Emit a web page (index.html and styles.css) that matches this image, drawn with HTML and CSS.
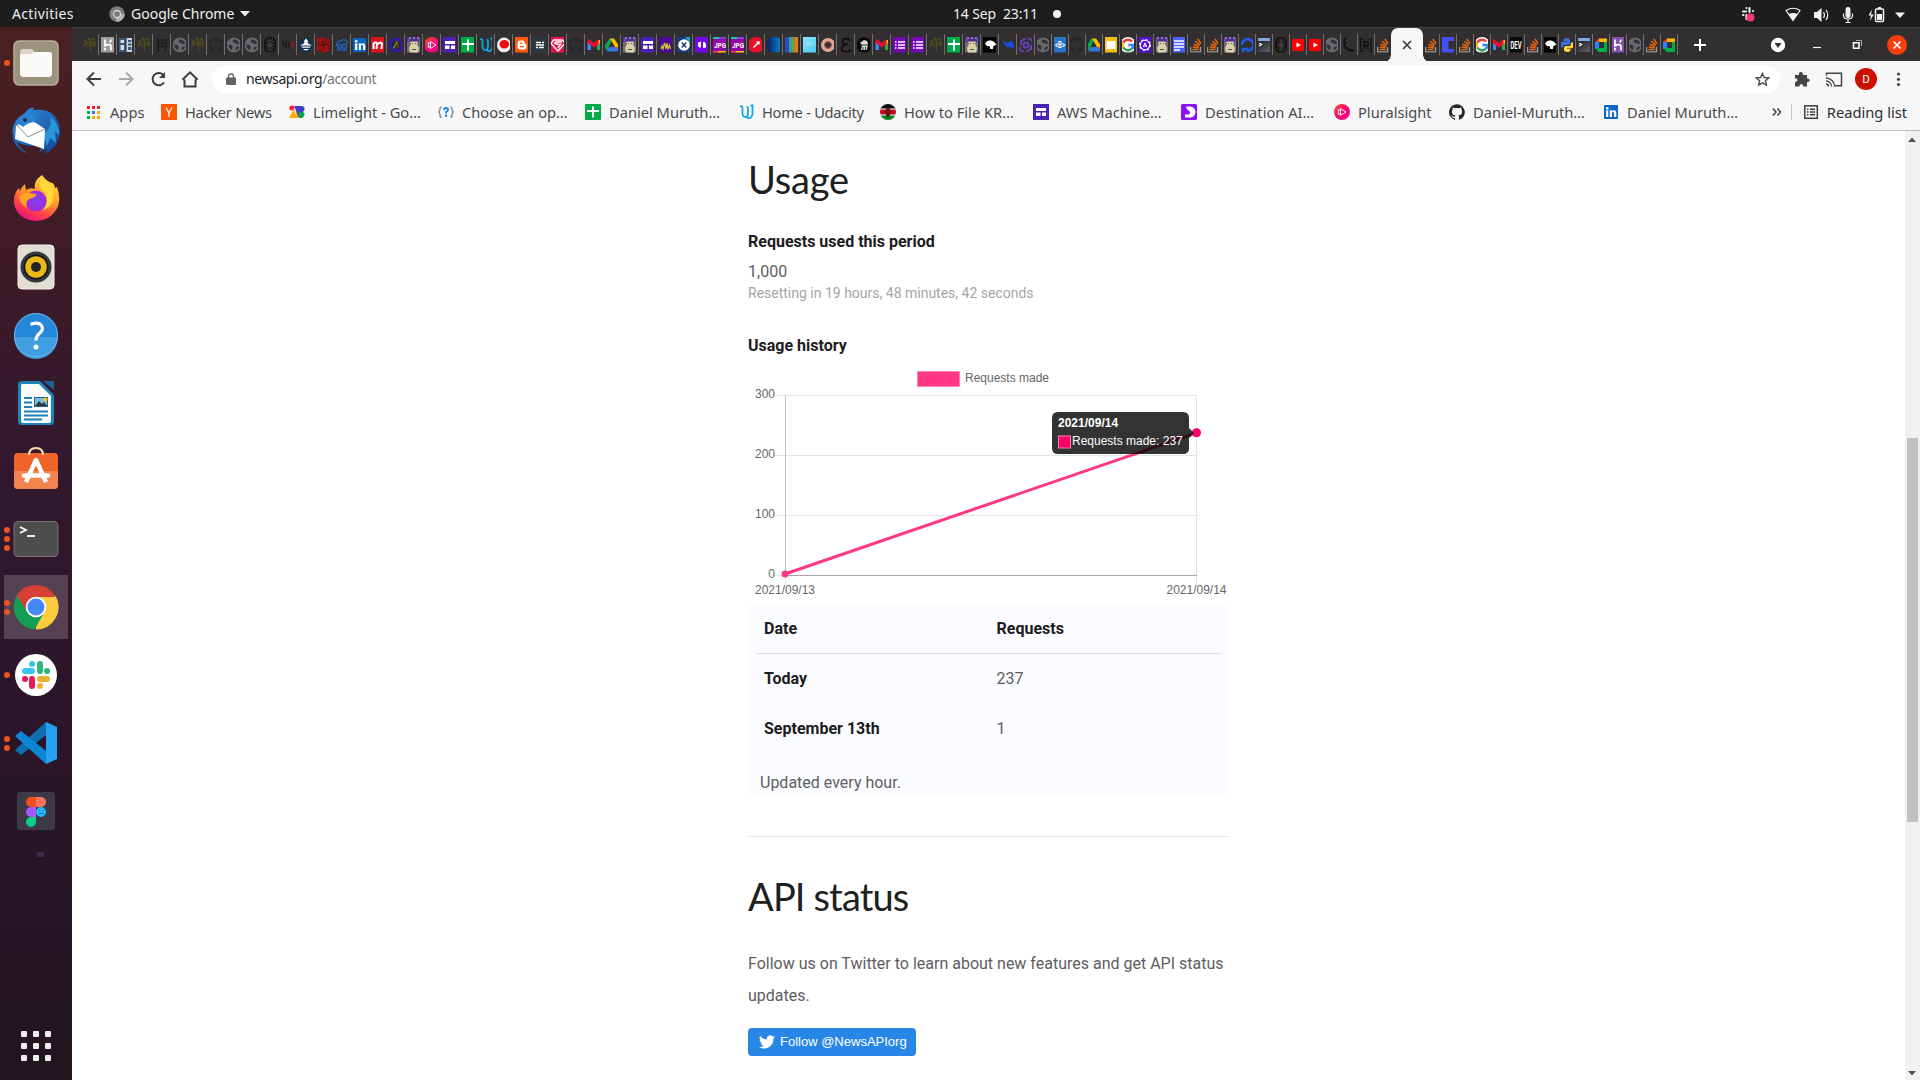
FILE: index.html
```html
<!DOCTYPE html>
<html lang="en">
<head>
<meta charset="utf-8">
<title>newsapi.org/account</title>
<link rel="stylesheet" href="styles.css">
</head>
<body>
<svg class="sprite" width="0" height="0" aria-hidden="true">
  <defs>
    <linearGradient id="g-blue" x1="0" x2="1"><stop offset="0.15" stop-color="#0b2a6b"/><stop offset="1" stop-color="#0a86d0"/></linearGradient>
    <linearGradient id="g-plural" x1="0" y1="0" x2="1" y2="1"><stop offset="0" stop-color="#ff4a2a"/><stop offset="0.6" stop-color="#f0047f"/></linearGradient>
    <linearGradient id="g-cyan" x1="0" y1="0" x2="1" y2="1"><stop offset="0" stop-color="#8be9fb"/><stop offset="1" stop-color="#45c6f0"/></linearGradient>
    <linearGradient id="g-term" x1="0" y1="0" x2="1" y2="1"><stop offset="0" stop-color="#111"/><stop offset="1" stop-color="#667"/></linearGradient>
  </defs>
  <symbol id="tree" viewBox="0 0 16 16"><g fill="none" stroke="#4b501b" stroke-width="1.1"><path d="M8.500 15V8M8.500 10L4 5M8.500 9L12 4M8.500 8V2M6 7H2.500M10 7h4"/></g><g fill="#4b501b"><circle cx="3.500" cy="4.500" r="1.400"/><circle cx="7" cy="2" r="1.400"/><circle cx="11" cy="2.500" r="1.400"/><circle cx="13.500" cy="5.500" r="1.300"/><circle cx="2.800" cy="8" r="1.200"/><circle cx="12.500" cy="8.500" r="1.200"/><circle cx="8.200" cy="5" r="1.500"/></g></symbol>
  <symbol id="herokugrey" viewBox="0 0 16 16"><path fill="#9d9d9d" d="M0 0h16v16H0z"/><path d="M5 2.500v6.300c2.500-1.800 6-1.600 6 .8v3.900M11 2.500c0 1.300-.6 2.200-1.200 3M5 13.500v-2.500" fill="none" stroke="#fff" stroke-width="1.800"/></symbol>
  <symbol id="heroku" viewBox="0 0 16 16"><path fill="#8253a8" d="M0 0h16v16H0z"/><path d="M5 2.500v6.300c2.500-1.800 6-1.600 6 .8v3.900M11 2.500c0 1.300-.6 2.200-1.200 3M5 13.500v-2.500" fill="none" stroke="#fff" stroke-width="1.700"/></symbol>
  <symbol id="panels" viewBox="0 0 16 16"><path fill="#365a78" d="M1 1h6.500v14H1z"/><path fill="#cfd6dc" d="M8.500 1H15v14H8.500z"/><path fill="#cfe0ec" d="M2.500 3h3.500v3H2.500zM2.500 8h3.500v5H2.500z"/><path fill="#365a78" d="M10 3h3.500v2H10zM10 6.500h3.500v2H10zM10 10h3.500v3H10z"/></symbol>
  <symbol id="glyph" viewBox="0 0 16 16"><path d="M2 3h12M2 6h12M2 9h12M4.500 2v13M11.500 2v13M8 4v7" fill="none" stroke="#1c1b1c" stroke-width="1.200"/></symbol>
  <symbol id="globe" viewBox="0 0 16 16"><circle cx="8" cy="8" r="7.500" fill="#656a70"/><path fill="#322f30" d="M2.500 7.500c2 .2 3.500.8 4 2 .4 1.200-.7 1.800-.4 3.500-2.500-.8-3.900-3-3.600-5.500zM8 2.500c2 0 4.500 1.500 5.200 3.600-.8 1.300-2.400 1.300-3 .4-.8-1.100-2.600-.3-3.300-1.600-.2-1 0-2.100 1.100-2.400zM10 10l3.300-.6C12.700 11.600 11 13 9.500 13.300z"/></symbol>
  <symbol id="gitdark" viewBox="0 0 16 16"><path fill="#24272b" d="M8 .2a8 8 0 0 0-2.500 15.600c.4.100.5-.2.500-.4v-1.500c-2.200.5-2.700-1-2.700-1-.4-.9-.9-1.200-.9-1.200-.7-.5.100-.5.100-.5.800.1 1.200.8 1.200.8.700 1.200 1.900.9 2.300.7.100-.5.300-.9.500-1.100-1.800-.2-3.600-.9-3.600-4 0-.9.300-1.600.8-2.100-.1-.2-.4-1 .1-2.100 0 0 .7-.2 2.200.8a7.500 7.500 0 0 1 4 0c1.500-1 2.200-.8 2.200-.8.400 1.100.2 1.900.1 2.100.5.600.8 1.300.8 2.100 0 3.100-1.900 3.700-3.700 3.900.3.300.6.800.6 1.500v2.300c0 .2.100.5.600.4A8 8 0 0 0 8 .2z"/></symbol>
  <symbol id="github" viewBox="0 0 16 16"><path fill="#24292e" d="M8 .2a8 8 0 0 0-2.500 15.600c.4.100.5-.2.500-.4v-1.500c-2.200.5-2.700-1-2.700-1-.4-.9-.9-1.200-.9-1.200-.7-.5.100-.5.100-.5.800.1 1.200.8 1.200.8.700 1.200 1.900.9 2.300.7.100-.5.300-.9.500-1.100-1.800-.2-3.600-.9-3.600-4 0-.9.300-1.600.8-2.100-.1-.2-.4-1 .1-2.100 0 0 .7-.2 2.200.8a7.500 7.500 0 0 1 4 0c1.500-1 2.200-.8 2.200-.8.400 1.100.2 1.900.1 2.100.5.600.8 1.300.8 2.100 0 3.100-1.900 3.700-3.700 3.900.3.300.6.800.6 1.500v2.300c0 .2.100.5.600.4A8 8 0 0 0 8 .2z"/></symbol>
  <symbol id="knot" viewBox="0 0 16 16"><rect x="2" width="12" height="16" rx="5" fill="#161516"/><g fill="none" stroke="#434142"><circle cx="8" cy="8" r="2"/><path d="M4 4l8 8M12 4l-8 8M8 1.500v13M4 8h8M5 2.500q3 3 6 0M5 13.500q3-3 6 0"/></g></symbol>
  <symbol id="four" viewBox="0 0 16 16"><path d="M3 4v4h3.500M6 4v8M9 4v8" fill="none" stroke="#161516" stroke-width="1.200"/><path d="M11 5l3-1v8l-3-3z" fill="#7c1b2b"/></symbol>
  <symbol id="mount" viewBox="0 0 16 16"><circle cx="8" cy="8" r="7.500" fill="#12304f"/><path fill="#fff" d="M8 1.500l2 2.500-.5 2 4.500 2.500H2l4.500-2.500L6 4zM3 9.500h10l-1.500 1.300h-7zM5 12h6l-1.500 1.200h-3z"/></symbol>
  <symbol id="redswirl" viewBox="0 0 16 16"><path d="M1 1l6-.5L15 3v10l-6 2.500L1 14z" fill="#a31212"/><path d="M8 8c-3-1-2-5 2-6M8 8c3-2 6 0 5 4M8 8c1 4-2 6-5 5M8 8C5 10 2 8 2 5M8 8c0-3 4-5 6-2" stroke="#3c1516" fill="none"/></symbol>
  <symbol id="cloud" viewBox="0 0 16 16"><path d="M2.500 9C2 5 5 3.500 7 4c2-3 7-1 6.500 3M3 13h10" fill="none" stroke="#1e62b8" stroke-width="1.300"/><g fill="none" stroke="#1e62b8" stroke-width="1.500"><circle cx="5.700" cy="9.300" r="2"/><circle cx="10.300" cy="9.300" r="2"/></g></symbol>
  <symbol id="linkedin" viewBox="0 0 16 16"><rect x="1" y="1" width="14" height="14" rx="1" fill="#0a66c2"/><circle cx="4.200" cy="4.200" r="1.300" fill="#fff"/><path d="M3.100 6.300h2.200V13H3.100zM6.800 6.300H9v1c1-1.700 4.300-1.500 4.300 1.500V13H11V9.500c0-2-2-1.800-2 0V13H6.800z" fill="#fff"/></symbol>
  <symbol id="mred" viewBox="0 0 16 16"><path fill="#d9151d" d="M0 0h16v16H0z"/><path d="M3.500 12V6.500q2.200-2 3.500 0L6.500 12M7.500 7q2.500-2.500 4.500-.5L11.500 12" fill="none" stroke="#fff" stroke-width="2"/></symbol>
  <symbol id="acog" viewBox="0 0 16 16"><circle cx="8" cy="8" r="5.700" fill="#26282c" stroke="#3413c9" stroke-width="1.800"/><circle cx="8" cy="8" r="7" fill="none" stroke="#3413c9" stroke-width="1.500" stroke-dasharray="2 2.500"/><path d="M5.500 11.500L9.500 4" stroke="#53a53a" stroke-width="1.500"/><path d="M9.500 4L10 11" stroke="#c22" stroke-width="1.100"/></symbol>
  <symbol id="knight" viewBox="0 0 16 16"><path fill="#766a81" d="M0 0h16v16H0z"/><path fill="#51328a" d="M1 0h14v5H1z"/><path d="M3 1h2M7 1h2M11 1h2M2 3h1M13 3h1" stroke="#cbb7e8"/><path fill="#d8d4a8" d="M4 4.500h8l-1 2.500 2 4-1 5H4l-1-5 2-4z"/><path d="M6 6.500h1M9 6.500h1M6 12.500h4" stroke="#57504a" stroke-width="1.200"/></symbol>
  <symbol id="plural" viewBox="0 0 16 16"><circle cx="8" cy="8" r="8" fill="url(#g-plural)"/><path d="M6.500 4.500l5.500 3.500-5.500 3.500zM4.300 5.500v5l2.200-1.200V6.700z" fill="none" stroke="#fff" stroke-width=".9"/></symbol>
  <symbol id="formp" viewBox="0 0 16 16"><path fill="#4d21b8" d="M0 0h16v16H0z"/><path fill="#fff" d="M3 4h10v3H3zM3 8.500h4.500v3.500H3zM9 8.500h4v3.500H9z"/></symbol>
  <symbol id="green" viewBox="0 0 16 16"><rect width="16" height="16" rx="1" fill="#00ac47"/><path fill="#fff" d="M2 6h5V2.500h2V6h5v2H9v5.500H7V8H2z"/></symbol>
  <symbol id="uda" viewBox="0 0 16 16"><path d="M2 2.500c2-1 2.500 0 2.500 2v4.500c0 5.500 5.500 5 5.500 0V4.500C10 2.500 8.500 3 8.500 3M8.500 13c4 3 6-1 6-3.500V1.500h-2" fill="none" stroke="#12a8e0" stroke-width="1.800"/></symbol>
  <symbol id="redeye" viewBox="0 0 16 16"><ellipse cx="8" cy="8" rx="7" ry="7.500" fill="#f3f3f3"/><ellipse cx="8.300" cy="7.200" rx="4.800" ry="4.300" fill="#f00c0c"/></symbol>
  <symbol id="blogger" viewBox="0 0 16 16"><rect width="16" height="16" rx="1" fill="#ff5a0a"/><path d="M6 3.500h2.500a2.300 2.300 0 0 1 2.200 2.500q0 1 1 1.200.8.100.8 1v1.500a3 3 0 0 1-3 2.800H6.300A2.800 2.800 0 0 1 3.500 9.800V6.200A2.700 2.700 0 0 1 6 3.500z" fill="#fff"/><path d="M6 6.200h2.300M6 9.700h4" stroke="#ff5a0a" stroke-width="1.300"/></symbol>
  <symbol id="tealines" viewBox="0 0 16 16"><path fill="#2c3a40" d="M0 0h16v16H0z"/><path d="M4 5.500h5M10 5.500h2M4 8h8M4 10.500h2M7 10.500h5" stroke="#fff" stroke-width="1.300"/></symbol>
  <symbol id="superp" viewBox="0 0 16 16"><path fill="#f0104b" d="M0 0h16v16H0z"/><path d="M3.500 3h9L15 6.500 8 14 1 6.500z" fill="#f0104b" stroke="#fff" stroke-width="1.300"/><path d="M12 5H6.500Q4.500 5 5 6.500q3 1 5.500 1L8 11" stroke="#fff" stroke-width="1.600" fill="none"/></symbol>
  <symbol id="gmail" viewBox="0 0 16 16"><path fill="#4285f4" d="M1.500 4.500L5 7v6H1.500z"/><path fill="#34a853" d="M11 7l3.500-2.500V13H11z"/><path fill="#ea0f2f" d="M1.500 3.500Q3 1.700 5 3.500l3 2.700 3-2.700q2-1.800 3.500 0v2.300L8 10.500 1.500 5.800z"/><path fill="#fbbc04" d="M12.500 3h2v3l-2 1.300z"/></symbol>
  <symbol id="drive" viewBox="0 0 16 16"><path fill="#11a550" d="M5.500 1.500h3L5 9.500l-2 4L0 9.500z"/><path fill="#ffba00" d="M6 1.500h4L16 10h-5z"/><path fill="#3777e3" d="M5 10h11l-2.500 4.500h-11z"/><path fill="#e8402f" d="M12 10h4l-1.800 3z"/></symbol>
  <symbol id="crown" viewBox="0 0 16 16"><path fill="#4a0a93" d="M0 0h16v16H0z"/><path d="M3 12l1-3 1 3 1.500-6L8 12l1-6 1 6 1.500-4 1 4" fill="none" stroke="#d6d722" stroke-width="1.100"/></symbol>
  <symbol id="xblue" viewBox="0 0 16 16"><path fill="#173b77" d="M0 0h16v16H0z"/><path fill="#1ba1d8" d="M9 0h7v9z"/><circle cx="8" cy="8" r="5.800" fill="#fff"/><path d="M5.800 5.500l4.400 5M10.200 5.500l-4.400 5" stroke="#173b77" stroke-width="1.500"/></symbol>
  <symbol id="tooth" viewBox="0 0 16 16"><path fill="#7209e8" d="M0 0h16v16H0z"/><path d="M4 5.500l3-1v6H5.500Q4 10 4 8zM9 5h1.500Q12 6 12 8v2.500L9 11z" fill="#fff"/></symbol>
  <symbol id="jpgbg" viewBox="0 0 16 16"><path fill="#9508a8" d="M0 0h16v16H0z"/><path d="M0 1h7" stroke="#15c7a3" stroke-width="2"/><path d="M7 1h9" stroke="#7d42df" stroke-width="2"/><path d="M1 15h5" stroke="#ff3b58" stroke-width="2"/><path d="M6 15h9" stroke="#ffc800" stroke-width="2"/></symbol>
  <symbol id="redball" viewBox="0 0 16 16"><circle cx="8" cy="8" r="8" fill="#e8102a"/><path d="M5.500 10.500l5-5M8.500 5h2.500v2.500" stroke="#fff" stroke-width="1.500" fill="none"/></symbol>
  <symbol id="bluegrad" viewBox="0 0 16 16"><rect x="1" width="14" height="16" rx="5" fill="url(#g-blue)"/></symbol>
  <symbol id="stripes" viewBox="0 0 16 16"><path fill="#2d4dbd" d="M0 0h5v16H0z"/><path fill="#3c9d9c" d="M5 0h3v16H5z"/><path fill="#6aa042" d="M8 0h3v16H8z"/><path fill="#f27410" d="M11 0h4v16h-4z"/></symbol>
  <symbol id="cyan" viewBox="0 0 16 16"><path fill="url(#g-cyan)" d="M0 0h16v16H0z"/><path d="M5 5v4M5 7h3V5v4M10 6q2 1 0 2" stroke="#b9d6ee" fill="none"/></symbol>
  <symbol id="donut" viewBox="0 0 16 16"><circle cx="8" cy="8" r="5" fill="#322f30" stroke="#dfa892" stroke-width="4"/><circle cx="8" cy="8" r="3.500" fill="none" stroke="#8f4d64"/></symbol>
  <symbol id="sdark" viewBox="0 0 16 16"><path d="M12.500 4Q11 1.500 8 1.500 4.500 1.500 4.500 5 4.500 8 10 7.500 4.500 8 3.500 11q0 4 4.500 4 3.500 0 5-2.500" fill="none" stroke="#0d0d0d" stroke-width="1.700"/></symbol>
  <symbol id="blackround" viewBox="0 0 16 16"><circle cx="8" cy="8" r="7.700" fill="#080808"/><path fill="#dcdcdc" d="M4 6l4-3 3 1 1 3-1 6H5l1-5z"/><path d="M4 8h8M7 10v3M9.500 10v3" stroke="#333"/></symbol>
  <symbol id="listp" viewBox="0 0 16 16"><rect width="16" height="16" rx="1" fill="#7408b5"/><path d="M3 5h1.500M6 5h7M3 8h1.500M6 8h7M3 11h1.500M6 11h7" stroke="#fff" stroke-width="1.600"/></symbol>
  <symbol id="head" viewBox="0 0 16 16"><path fill="#000" d="M0 0h16v16H0z"/><path fill="#fff" d="M3 7q1-4 6-3.500Q14 5 14 8l-2.500 1L11 12H8V9.500L5 9z"/></symbol>
  <symbol id="bird" viewBox="0 0 16 16"><path fill="#1550d8" d="M2 4l6 2 2-2q3 0 4 5l-1 3-3-2-3 .5z"/></symbol>
  <symbol id="hex" viewBox="0 0 16 16"><g fill="none" stroke="#6c3fb5" stroke-width="2"><path d="M7.500 1.500L3 4v4M1.500 9.500v3L6 15M8.500 14.500L13 12V8M14.500 6.500v-3L10 1"/><circle cx="8" cy="8" r="2.500"/></g></symbol>
  <symbol id="keep" viewBox="0 0 16 16"><path fill="#f8bd05" d="M0 0h16v16H0z"/><path fill="#fff" d="M3.500 4h9v8h-9z"/></symbol>
  <symbol id="goog" viewBox="0 0 16 16"><circle cx="8" cy="8" r="8" fill="#fff"/><g fill="none" stroke-width="2.600"><path d="M12 4.500A5.400 5.400 0 0 0 3.300 5.500" stroke="#ea4335"/><path d="M3.300 5.500a5.400 5.400 0 0 0 0 5" stroke="#fbbc05"/><path d="M3.300 10.500a5.400 5.400 0 0 0 8.200 1.600" stroke="#34a853"/><path d="M11.500 12.100Q13.500 10.500 13.400 8H8.300" stroke="#4285f4"/></g></symbol>
  <symbol id="apurple" viewBox="0 0 16 16"><path fill="#5511df" d="M0 0h16v16H0z"/><circle cx="8" cy="8" r="4.700" fill="none" stroke="#fff" stroke-width="1.100"/><circle cx="8" cy="8" r="5.500" fill="none" stroke="#fff" stroke-width="1.100" stroke-dasharray="2 2.300"/><path d="M6.300 10L8 5.800 9.700 10M7 9h2" fill="none" stroke="#fff"/></symbol>
  <symbol id="docs" viewBox="0 0 16 16"><path fill="#4e60ff" d="M0 0h16v16H0z"/><path d="M3 4h10M3 7h10M3 10h10M3 13h6" stroke="#fff" stroke-width="1.500"/></symbol>
  <symbol id="so" viewBox="0 0 16 16"><path d="M2.500 10v5h10v-5" fill="none" stroke="#9a9da0" stroke-width="1.400"/><path d="M4.500 12.500h6M4.700 10l6 .8M5.500 7.200l5.600 2.100M7.200 4.300l4.700 3.500M9.800 2l3.200 4.700" stroke="#e8680f" stroke-width="1.500"/></symbol>
  <symbol id="qblue" viewBox="0 0 16 16"><path d="M8 13.500A5.700 5.700 0 1 0 3 8M8 10.500v3.200M6.500 12H4v3" fill="none" stroke="#1b5ee8" stroke-width="2.600"/></symbol>
  <symbol id="term" viewBox="0 0 16 16"><path fill="url(#g-term)" d="M0 1h16v14H0z"/><path fill="#88a7dd" d="M0 1h16v3H0z"/><path d="M3 6l2.500 1.500L3 9" stroke="#fff" fill="none" stroke-width="1.200"/></symbol>
  <symbol id="yt" viewBox="0 0 16 16"><rect x="1" y="2" width="14" height="12" rx="1.500" fill="#f00"/><path fill="#fff" d="M6.500 5.500L11 8l-4.500 2.500z"/></symbol>
  <symbol id="feather" viewBox="0 0 16 16"><path d="M4 1q-1 9 3 11.500 3 1.500 6 .8" stroke="#161516" stroke-width="3" fill="none"/><path d="M4.500 4l3-1M4.500 8h3" stroke="#444"/></symbol>
  <symbol id="bracket" viewBox="0 0 16 16"><path fill="#4650f2" d="M2 0h12v4H8.500v8H14v4H2z"/></symbol>
  <symbol id="python" viewBox="0 0 16 16"><path fill="#3f6be0" d="M4.500 2.500Q5.500 1 8 1t3 1.800V7L9.500 8h-4Q4 8 4 10.500H2.500Q1 10 1.500 6q.5-1.500 3-1.500H8V4H4.500z"/><path fill="#ffd43b" d="M11.500 13.500Q10.500 15 8 15t-3-1.800V10l1.500-1h4Q12 9 12 5.500h1.500Q15 6 14.500 10q-.5 1.500-3 1.500H8v.5h3.500z"/></symbol>
  <symbol id="meet" viewBox="0 0 16 16"><path fill="#2684fc" d="M2 5h4v7H2z"/><path fill="#e94235" d="M2 5l4-3.500V5z"/><path fill="#ffba00" d="M6 1.500h8V8l-3-3H6z"/><path fill="#00ac47" d="M3 11h8V6l3-2v11H5z"/></symbol>
  <symbol id="kenya" viewBox="0 0 16 16"><clipPath id="kc"><circle cx="8" cy="8" r="8"/></clipPath><g clip-path="url(#kc)"><path fill="#0b0b0b" d="M0 0h16v5H0z"/><path fill="#fff" d="M0 4.500h16v7H0z"/><path fill="#c4091b" d="M0 5.500h16v5H0z"/><path fill="#0a7a1c" d="M0 11.500h16V16H0z"/><ellipse cx="8" cy="8" rx="2" ry="4.500" fill="#8d0a14" stroke="#222"/></g></symbol>
  <symbol id="lime" viewBox="0 0 16 16"><circle cx="2.800" cy="4" r="2.500" fill="#ff1f35"/><path fill="#ffab00" d="M0 14L5 5l2 9zM7 6l3 8H6z"/><path fill="#3a3fc6" d="M5 2h5v12z"/><path fill="#3a3fc6" d="M10 2h3q3 1 2.500 3.500L14 8h-4z"/><path fill="#00a64d" d="M10 8h4q2 1 1.500 3T13 14h-3z"/></symbol>
  <symbol id="choose" viewBox="0 0 16 16"><path d="M4 3H3Q2 3 2 5T.5 8Q2 8 2 11t1 2h1M12 3h1q1 0 1 2t1.500 3Q14 8 14 11t-1 2h-1" fill="none" stroke="#777" stroke-width="1.200"/><path d="M6 6q0-2 2-2t2 1.700Q10 7 8 8v1.500" fill="none" stroke="#0b8af0" stroke-width="1.900"/><circle cx="8" cy="11.700" r="1.200" fill="#0b8af0"/></symbol>
  <symbol id="dest" viewBox="0 0 16 16"><rect width="16" height="16" rx="1.500" fill="#8b10f5"/><path d="M5 2.500h4a5 5 0 0 1 0 11H4v-3h4a3 3 0 0 0 0-4q-2 0-3-4z" fill="#fff"/></symbol>
</svg>

<header class="topbar">
  <span class="activities">Activities</span>
  <svg class="appicon" width="16" height="16"><circle cx="8" cy="8" r="7.700" fill="#7d7d7d"/><path d="M8 8h7.700A7.700 7.700 0 0 1 7 15.600z" fill="#b5b5b5"/><circle cx="8" cy="8" r="3.500" fill="#777" stroke="#d5d5d5" stroke-width="1.300"/></svg>
  <span class="appname">Google Chrome</span>
  <svg class="appcaret" width="10" height="6"><path d="M0 0h10L5 5.500z" fill="#f2f2f2"/></svg>
  <time class="clock">14 Sep&nbsp; 23:11</time>
  <span class="clockdot"></span>
  <svg class="tray" width="168" height="24" fill="#f2f2f2">
    <g stroke="#e8e8e8" stroke-width="2.200" stroke-linecap="round"><path d="M4 9.500h3M7.500 6v.1M10.500 6v4M14 9h.1M4 13h.5M7.500 13v4M10 13h3"/></g><circle cx="11.500" cy="15.500" r="4" fill="#f0387c"/>
    <path d="M47 8.500q7.500-4.500 14 0L54 18.500z" fill="none" stroke="#f2f2f2" stroke-width="1.200"/><path d="M49.500 12q4.500-2 9 0L54 18.500z"/>
    <path d="M75 10h3l4.500-4v14L78 16h-3z"/><path d="M84.500 10q2 3 0 6M87 8q3.500 5 0 10" fill="none" stroke="#f2f2f2" stroke-width="1.200"/>
    <rect x="106.500" y="5" width="5" height="11" rx="2.500"/><path d="M104.500 11.500v2q0 3.500 4.500 3.500t4.500-3.500v-2M109 17v3.500M106.500 20.500h5" fill="none" stroke="#f2f2f2" stroke-width="1.200"/>
    <path d="M133 7.500l-3.500 6h2.500l-1 5.500 3.700-6.500H132z"/><rect x="136.500" y="7" width="8" height="12.500" rx="1" fill="none" stroke="#f2f2f2" stroke-width="1.500"/><path d="M139 5h3v2h-3zM138 12h5v6h-5z"/>
    <path d="M156 10.500h10l-5 5.500z"/>
  </svg>
</header>

<div class="desktop">
  <nav class="dock">
    <div class="launcher"><span class="dots"><b></b></span>
      <svg width="48" height="48"><rect x="2" y="2" width="44" height="44" rx="5" fill="#9c937d" stroke="#b9b09a" stroke-width="1.500"/><path d="M8 13q0-3 3-3h9l3 3h14q3 0 3 3v18q0 4-4 4H12q-4 0-4-4z" fill="#dbd5c7"/><path d="M8 17q0-2 2-2h9l4-2h14q3 0 3 3v18q0 4-4 4H12q-4 0-4-4z" fill="#fbfaf8"/></svg></div>
    <div class="launcher">
      <svg width="48" height="48"><defs><linearGradient id="tb" x1="0" x2="1" y2="1"><stop offset="0" stop-color="#3391e0"/><stop offset="1" stop-color="#0c438f"/></linearGradient></defs><path d="M13 6Q17 0 22 1l-1 2Q46 0 48 24q-1 16-15 23l2-5-8 3 3-6Q4 40 1 30-2 14 13 6z" fill="url(#tb)"/><path d="M38 9q10 9 9 19l-4-4 1 12-6-5-3 8-4-12q10-6 7-18z" fill="#2c94dc"/><path d="M1 25q3 15 16 22l-7-3Q-1 36 1 25z" fill="#1b5eaf"/><path d="M4 19q10-8 20-3l9 6-1 20L3 32z" fill="#fff"/><path d="M5 18l11 12 17-8" fill="none" stroke="#8d9296"/><path d="M4 17Q7 6 17 7q10 2 5 8-7 1-11 5-3-3-7-3z" fill="#2c83d2"/><circle cx="13" cy="13" r="2" fill="#283050"/></svg></div>
    <div class="launcher">
      <svg width="48" height="48"><defs><linearGradient id="ff" x1=".8" y1="0" x2=".3" y2="1"><stop offset="0" stop-color="#ffe63f"/><stop offset=".45" stop-color="#ff9a2a"/><stop offset=".75" stop-color="#ff4444"/><stop offset="1" stop-color="#e80c83"/></linearGradient><radialGradient id="ffp"><stop offset="0" stop-color="#7a45f5"/><stop offset="1" stop-color="#a32bd6"/></radialGradient></defs><path d="M30 0q4 6 10 8 2 0 3 5l2-1q5 14-1 23-7 11-20 11Q6 45 2 29q-1-10 5-16l1 3q2-5 5-7l1 6q4-3 9-1-2-8 7-14z" fill="url(#ff)"/><circle cx="24" cy="26" r="10.500" fill="url(#ffp)"/><path d="M7 22q4-5 10-4l8 1q-2 4-8 5-4 3-2 9-7-4-8-11z" fill="#ffa322"/><path d="M29 4q-4 7 4 14 5 8-2 17 11-3 11-17-1-8-13-14z" fill="#ffd83a"/></svg></div>
    <div class="launcher">
      <svg width="48" height="48"><rect x="6" y="2" width="36" height="44" rx="4" fill="#e3ded3" stroke="#f4f1ea"/><circle cx="24" cy="24" r="15.500" fill="#31383f"/><circle cx="24" cy="24" r="12.500" fill="#101418"/><circle cx="24" cy="24" r="10.800" fill="#e9b716"/><circle cx="24" cy="24" r="5" fill="#202428"/></svg></div>
    <div class="launcher">
      <svg width="48" height="48"><circle cx="24" cy="24" r="22" fill="#2488d8"/><path d="M2 26h44a22 22 0 0 1-44 0z" fill="#409de0"/><circle cx="24" cy="24" r="21.500" fill="none" stroke="#6db6ea"/><path d="M18.500 13.500q5-2.500 9.500-.5 5 4 0 9-4 3-4 7.500" fill="none" stroke="#fff" stroke-width="3.200"/><circle cx="24" cy="36" r="2.500" fill="#fff"/></svg></div>
    <div class="launcher">
      <svg width="48" height="48"><path d="M10 2h18l14 14v26q0 4-4 4H10q-4 0-4-4V6q0-4 4-4z" fill="#2083b7"/><path d="M10 5h17l12 12v25q0 2-2 2H11q-2 0-2-2V6z" fill="#fafcfd"/><path d="M31 2h11v9z" fill="#166490"/><path d="M12 19h8M12 23.500h8M12 28h8M12 32.500h24M12 36.500h24M12 40.500h18" stroke="#1c81b5" stroke-width="2"/><path d="M22 18h14v10H22z" fill="#1c6286"/><path d="M23 19h12v8H23z" fill="#7bbce0"/><path d="M23 27l4-5 3 3 2-2 3 4z" fill="#2d3b40"/><circle cx="33.500" cy="20.500" r="2" fill="#f6c51d"/></svg></div>
    <div class="launcher">
      <svg width="48" height="48"><rect x="2" y="6" width="44" height="36" rx="4" fill="#f0642c"/><path d="M2 24h44v14q0 4-4 4H6q-4 0-4-4z" fill="#f3834f"/><path d="M17 8q0-7 7-7t7 7" fill="none" stroke="#f3ddb0" stroke-width="2"/><path d="M14 35l10-22 10 22" fill="none" stroke="#fff" stroke-width="4.500" stroke-linejoin="round"/><path d="M12 28.500h24" stroke="#fff" stroke-width="4.500" stroke-linecap="round"/></svg></div>
    <div class="launcher"><span class="dots"><b></b><b></b><b></b></span>
      <svg width="48" height="48"><rect x="2" y="6.500" width="44" height="35" rx="4" fill="#4d4d4b" stroke="#777"/><path d="M8 12l6 3-6 3" fill="none" stroke="#fff" stroke-width="1.800"/><path d="M15 21h8" stroke="#fff" stroke-width="1.800"/></svg></div>
    <div class="launcher launcher-active"><span class="dots"><b></b><b></b></span>
      <svg width="48" height="48"><path d="M24 24l19.500-11.300A22.500 22.500 0 0 1 24 46.500z" fill="#fdcb3f"/><path d="M24 13.700h20l-6 13-14-2z" fill="#fdcb3f"/><path d="M4.500 12.700A22.500 22.500 0 0 1 43.500 13.700H24L14 28z" fill="#d83f35"/><path d="M5 12.500l10.500 17L24 34l8-4-9.500 16.400A22.500 22.500 0 0 1 5 12.500z" fill="#139e56"/><circle cx="24" cy="24" r="10.300" fill="#fff"/><circle cx="24" cy="24" r="8.500" fill="#4688f4"/></svg></div>
    <div class="launcher"><span class="dots"><b></b></span>
      <svg width="48" height="48"><circle cx="24" cy="24" r="21" fill="#fff"/><g stroke-width="6" stroke-linecap="round"><path d="M13 20h7M20 13v.1" stroke="#36c5f0"/><path d="M28 13v7M35 20h.1" stroke="#2eb67d"/><path d="M28 28h7M28 35v.1" stroke="#ecb22e"/><path d="M20 28v7M13 28h.1" stroke="#e01e5a"/></g></svg></div>
    <div class="launcher"><span class="dots"><b></b><b></b></span>
      <svg width="48" height="48"><path d="M34 3v13L9 36l-6-5z" fill="#0f6fb3"/><path d="M3 17l6-5 25 20v13z" fill="#0b87d3"/><path d="M34 3l11 5v32l-11 5z" fill="#27a0f2"/></svg></div>
    <div class="launcher">
      <svg width="48" height="48"><rect x="5" y="5" width="38" height="38" rx="3" fill="#3e3947"/><path d="M24 10h-5a5 5 0 0 0 0 10h5z" fill="#f24e1e"/><path d="M24 10h5a5 5 0 0 1 0 10h-5z" fill="#ff7262"/><path d="M24 20h-5a5 5 0 0 0 0 10h5z" fill="#a259ff"/><circle cx="29" cy="25" r="5" fill="#1abcfe"/><path d="M19 30h5v5a5 5 0 1 1-5-5z" fill="#0acf83"/><path d="M27 23.500h1M31 23.500h1M27 26.500h5" stroke="#23639a"/></svg></div>
    <span class="faint"></span>
    <div class="appgrid"><b></b><b></b><b></b><b></b><b></b><b></b><b></b><b></b><b></b></div>
  </nav>

  <section class="browser">
    <div class="tabstrip">
      <div class="tabs">
        <i><svg><use href="#tree"/></svg></i><i><svg><use href="#herokugrey"/></svg></i><i><svg><use href="#panels"/></svg></i><i><svg><use href="#tree"/></svg></i>
        <i><svg><use href="#glyph"/></svg></i><i><svg><use href="#globe"/></svg></i><i><svg><use href="#tree"/></svg></i><i><svg><use href="#gitdark"/></svg></i>
        <i><svg><use href="#globe"/></svg></i><i><svg><use href="#globe"/></svg></i><i><svg><use href="#knot"/></svg></i><i><svg><use href="#four"/></svg></i>
        <i><svg><use href="#mount"/></svg></i><i><svg><use href="#redswirl"/></svg></i><i><svg><use href="#cloud"/></svg></i><i><svg><use href="#linkedin"/></svg></i>
        <i><svg><use href="#mred"/></svg></i><i><svg><use href="#acog"/></svg></i><i><svg><use href="#knight"/></svg></i><i><svg><use href="#plural"/></svg></i>
        <i><svg><use href="#formp"/></svg></i><i><svg><use href="#green"/></svg></i><i><svg><use href="#uda"/></svg></i><i><svg><use href="#redeye"/></svg></i>
        <i><svg><use href="#blogger"/></svg></i><i><svg><use href="#tealines"/></svg></i><i><svg><use href="#superp"/></svg></i><i><svg><use href="#gitdark"/></svg></i>
        <i><svg><use href="#gmail"/></svg></i><i><svg><use href="#drive"/></svg></i><i><svg><use href="#knight"/></svg></i><i><svg><use href="#formp"/></svg></i>
        <i><svg><use href="#crown"/></svg></i><i><svg><use href="#xblue"/></svg></i><i><svg><use href="#tooth"/></svg></i>
        <i><svg><use href="#jpgbg"/><text x="2" y="11" font-size="7.500" font-weight="bold" fill="#fff" textLength="12" lengthAdjust="spacingAndGlyphs">JPG</text></svg></i>
        <i><svg><use href="#jpgbg"/><text x="2" y="11" font-size="7.500" font-weight="bold" fill="#fff" textLength="12" lengthAdjust="spacingAndGlyphs">JPG</text></svg></i>
        <i><svg><use href="#redball"/></svg></i><i><svg><use href="#bluegrad"/></svg></i><i><svg><use href="#stripes"/></svg></i>
        <i><svg><use href="#cyan"/></svg></i><i><svg><use href="#donut"/></svg></i><i><svg><use href="#sdark"/></svg></i><i><svg><use href="#blackround"/></svg></i>
        <i><svg><use href="#gmail"/></svg></i><i><svg><use href="#listp"/></svg></i><i><svg><use href="#listp"/></svg></i><i><svg><use href="#tree"/></svg></i>
        <i><svg><use href="#green"/></svg></i><i><svg><use href="#knight"/></svg></i><i><svg><use href="#head"/></svg></i><i><svg><use href="#bird"/></svg></i>
        <i><svg><use href="#hex"/></svg></i>
      </div>
      <div class="tabs tabs-narrow">
        <i><svg><use href="#globe"/></svg></i>
        <i><svg><path fill="#2b73c4" d="M0 0h16v16H0z"/><text x="3" y="11" font-size="8.500" font-weight="bold" fill="#fff" textLength="10" lengthAdjust="spacingAndGlyphs">&lt;B&gt;</text></svg></i>
        <i><svg><use href="#gitdark"/></svg></i><i><svg><use href="#drive"/></svg></i>
        <i><svg><use href="#keep"/></svg></i><i><svg><use href="#goog"/></svg></i><i><svg><use href="#apurple"/></svg></i><i><svg><use href="#knight"/></svg></i>
        <i><svg><use href="#docs"/></svg></i><i><svg><use href="#so"/></svg></i><i><svg><use href="#so"/></svg></i><i><svg><use href="#knight"/></svg></i>
        <i><svg><use href="#qblue"/></svg></i><i><svg><use href="#term"/></svg></i><i><svg><use href="#knot"/></svg></i><i><svg><use href="#yt"/></svg></i>
        <i><svg><use href="#yt"/></svg></i><i><svg><use href="#globe"/></svg></i><i><svg><use href="#feather"/></svg></i>
        <i><svg><path d="M5 2H2.800v12H5M11 2h2.200v12H11" fill="none" stroke="#141314" stroke-width="1.300"/><text x="8.200" y="12" text-anchor="middle" font-size="10.500" font-weight="bold" fill="#0c0c0c">R</text></svg></i>
        <i class="last"><svg><use href="#so"/></svg></i>
      </div>
      <div class="tab-active"><svg width="10" height="10"><path d="M1 1l8 8M9 1L1 9" stroke="#3c3c3c" stroke-width="1.700"/></svg></div>
      <div class="tabs tabs-narrow">
        <i><svg><use href="#so"/></svg></i><i><svg><use href="#bracket"/></svg></i><i><svg><use href="#so"/></svg></i><i><svg><use href="#goog"/></svg></i>
        <i><svg><use href="#gmail"/></svg></i>
        <i><svg><path fill="#0a0a0a" d="M0 0h16v16H0z"/><text x="2.500" y="12" font-size="10.500" font-weight="bold" fill="#fff" textLength="11" lengthAdjust="spacingAndGlyphs">DEV</text></svg></i>
        <i><svg><use href="#so"/></svg></i><i><svg><use href="#head"/></svg></i>
        <i><svg><use href="#python"/></svg></i><i><svg><use href="#term"/></svg></i><i><svg><use href="#meet"/></svg></i><i><svg><use href="#heroku"/></svg></i>
        <i><svg><use href="#globe"/></svg></i><i><svg><use href="#so"/></svg></i><i><svg><use href="#meet"/></svg></i>
      </div>
      <svg class="newtab" width="12" height="12"><path d="M6 0v12M0 6h12" stroke="#fff" stroke-width="2"/></svg>
      <svg class="wincontrols" width="138" height="22" fill="none"><circle cx="8" cy="11" r="7.200" fill="#fff"/><path d="M4.500 9h7L8 14z" fill="#322f30"/><path d="M43 13.500h8" stroke="#fff" stroke-width="1.200"/><path d="M83.500 8.800h5.500v5.500h-5.500z" stroke="#fff" stroke-width="1.600"/><path d="M86 6.500h5.500V12" stroke="#aaa"/><circle cx="127" cy="11" r="10" fill="#f73e0b"/><path d="M123.500 7.500l7 7M130.500 7.500l-7 7" stroke="#fff" stroke-width="1.700"/></svg>
    </div>

    <div class="toolbar">
      <svg class="navicons" width="114" height="20" fill="none" stroke="#3b3d40" stroke-width="2"><path d="M15 10H2M8 3.500L1.500 10 8 16.500"/><path d="M33 10h13M40 3.500L46.500 10 40 16.500" stroke="#a9a9a9"/><path d="M78 13.500A6.200 6.200 0 1 1 77 5.500l1.200 1.500"/><path d="M79 3v6h-6z" fill="#3b3d40" stroke="none"/><path d="M98.500 10.500v7h11v-7M96.500 10.800L104 3.300l7.500 7.500"/></svg>
      <div class="omnibox">
        <svg width="10" height="13"><path d="M1 4.500h8q1 0 1 1V11q0 1-1 1H1q-1 0-1-1V5.500q0-1 1-1z" fill="#5f6368"/><path d="M2.500 5V3q0-2 2.500-2t2.500 2v2" fill="none" stroke="#5f6368" stroke-width="1.400"/></svg>
        <span class="url"><b>newsapi.org</b>/account</span>
        <svg class="star" width="15" height="15"><path d="M7.500 1.500l1.800 4 4.400.4-3.300 2.900 1 4.300-3.900-2.300-3.900 2.300 1-4.300L1.300 5.900l4.400-.4z" fill="none" stroke="#4a4a4a" stroke-width="1.400"/></svg>
      </div>
      <svg class="toolicons" width="110" height="22"><path d="M1 7h4q-.5-3 1.800-3T9 7h4v3.500q2.700-.2 2.700 1.800T13 14v4.500H9.300q.2-2.500-1.900-2.500t-2 2.500H1V14q2.500.1 2.500-1.900T1 10.500z" fill="#444"/><path d="M32.500 7.500V5.200h15v12.500H41" fill="none" stroke="#444" stroke-width="1.500"/><path d="M32 16a2.500 2.500 0 0 1 2.500 2.500M32 13a5.500 5.500 0 0 1 5.500 5.500M32 10a8.500 8.500 0 0 1 8.500 8.500" fill="none" stroke="#444" stroke-width="1.300"/><circle cx="72" cy="11" r="11" fill="#cb1202"/><text x="72" y="15" font-size="11.500" text-anchor="middle" fill="#fff">D</text><g fill="#444"><circle cx="104.500" cy="6" r="1.600"/><circle cx="104.500" cy="11.300" r="1.600"/><circle cx="104.500" cy="16.500" r="1.600"/></g></svg>
    </div>

    <div class="bookmarks">
      <div class="bookmark-list">
        <a class="apps"><svg class="bm"><path fill="#f01b2c" d="M2 2h3v3H2zM7 2h3v3H7zM12 2h3v3h-3z"/><path fill="#00ac47" d="M2 7h3v3H2z"/><path fill="#2b7df0" d="M7 7h3v3H7z"/><path fill="#ffab00" d="M12 7h3v3h-3zM7 12h3v3H7zM12 12h3v3h-3z"/><path fill="#00ac47" d="M2 12h3v3H2z"/></svg><span>Apps</span></a>
        <a class="snug"><svg class="bm"><path fill="#ff5500" d="M0 0h16v16H0z"/><path d="M5 3.500L8 9l3-5.500M8 8.500V13" stroke="#fff" stroke-width="1.300" fill="none"/></svg><span>Hacker News</span></a>
        <a><svg class="bm"><use href="#lime"/></svg><span>Limelight - Go…</span></a>
        <a><svg class="bm"><use href="#choose"/></svg><span>Choose an op…</span></a>
        <a><svg class="bm"><use href="#green"/></svg><span>Daniel Muruth…</span></a>
        <a class="snug"><svg class="bm"><use href="#uda"/></svg><span>Home - Udacity</span></a>
        <a><svg class="bm"><use href="#kenya"/></svg><span>How to File KR…</span></a>
        <a><svg class="bm"><use href="#formp"/></svg><span>AWS Machine…</span></a>
        <a><svg class="bm"><use href="#dest"/></svg><span>Destination AI…</span></a>
        <a><svg class="bm"><use href="#plural"/></svg><span>Pluralsight</span></a>
        <a><svg class="bm"><use href="#github"/></svg><span>Daniel-Muruth…</span></a>
        <a><svg class="bm"><use href="#linkedin"/></svg><span>Daniel Muruth…</span></a>
      </div>
      <svg class="more" width="10" height="8"><path d="M1 .5L4 4 1 7.500M5.500.5l3 3.500-3 3.500" fill="none" stroke="#3c3c3c" stroke-width="1.500"/></svg>
      <span class="readsep"></span>
      <a class="reading"><svg class="bm"><rect x="1.800" y="1.800" width="12.500" height="12.500" fill="none" stroke="#3c3c3c" stroke-width="1.500"/><path d="M4 5.300h1.500M7 5.300h5M4 8h1.500M7 8h5M4 10.800h1.500M7 10.800h5" stroke="#3c3c3c" stroke-width="1.400"/></svg><span>Reading list</span></a>
    </div>

    <div class="viewport">
      <main class="page">
        <h2 class="title">Usage</h2>
        <h5 class="sub">Requests used this period</h5>
        <p class="count">1,000</p>
        <p class="reset">Resetting in 19 hours, 48 minutes, 42 seconds</p>
        <h5 class="sub history">Usage history</h5>
        <svg class="chart" width="481" height="240">
          <rect x="169.500" y="8.500" width="42" height="15" fill="#ff3785" stroke="#ff85b3"/>
          <text x="217" y="19">Requests made</text>
          <g stroke="#e4e4e4"><path d="M27 32.500H449M27 92.500H449M27 152.500H449M27 212.500H37M448.500 32V222M37.500 212V222"/></g>
          <path d="M37.500 32V212" stroke="#c4c4c4"/><path d="M38 212.500H449" stroke="#a6a6a6"/>
          <g text-anchor="end"><text x="27" y="35">300</text><text x="27" y="95">200</text><text x="27" y="155">100</text><text x="27" y="215">0</text></g>
          <g text-anchor="middle"><text x="37" y="231">2021/09/13</text><text x="448.500" y="231">2021/09/14</text></g>
          <path d="M37 211L448.500 69.800" stroke="#ff3785" stroke-width="3"/>
          <circle cx="37" cy="211" r="3.500" fill="#ff3785"/><circle cx="448.500" cy="69.800" r="4.500" fill="#ff0066"/>
          <path d="M310 49h125q6 0 6 6v10l5 5-5 5v10q0 6-6 6H310q-6 0-6-6V55q0-6 6-6z" fill="#000" fill-opacity=".8"/>
          <text x="310" y="64" class="tip tip-title">2021/09/14</text>
          <rect x="310.500" y="73" width="12" height="12" fill="#ff0066" stroke="#ff85b3"/>
          <text x="324" y="82" class="tip">Requests made: 237</text>
        </svg>
        <section class="panel">
          <table class="usage">
            <thead><tr><th>Date</th><th>Requests</th></tr></thead>
            <tbody><tr><th>Today</th><td>237</td></tr><tr><th>September 13th</th><td>1</td></tr></tbody>
          </table>
          <p class="updated">Updated every hour.</p>
        </section>
        <hr class="rule">
        <h2 class="title status">API status</h2>
        <p class="follow">Follow us on Twitter to learn about new features and get API status updates.</p>
        <a class="twitter"><svg width="16" height="14" viewBox="0 0 24 20"><path fill="#fff" d="M24 2.400c-.9.400-1.800.7-2.800.8 1-.6 1.800-1.600 2.200-2.700-1 .6-2 1-3.100 1.200a4.900 4.900 0 0 0-8.400 4.500C7.700 6 4.100 4.100 1.700 1.100a4.900 4.900 0 0 0 1.500 6.600c-.8 0-1.600-.2-2.200-.6 0 2.300 1.600 4.400 3.900 4.900-.7.200-1.500.2-2.200.1.600 2 2.400 3.400 4.600 3.400A9.900 9.900 0 0 1 0 17.500 14 14 0 0 0 21.500 5c1-.7 1.800-1.600 2.500-2.600z"/></svg><span>Follow @NewsAPIorg</span></a>
      </main>
      <div class="scrollbar"><svg width="9" height="5"><path d="M0 5h8L4 .5z" fill="#505050"/></svg><span class="thumb"></span><svg width="9" height="5"><path d="M0 0h8L4 4.500z" fill="#505050"/></svg></div>
    </div>
  </section>
</div>
</body>
</html>
```
FILE: styles.css
```css
* { box-sizing: border-box; }
body { margin: 0; width: 1920px; height: 1080px; overflow: hidden; background: #fff; font-family: "Noto Sans", sans-serif; display: flex; flex-direction: column; }
svg { display: block; flex: none; }
p, h2, h5 { margin: 0; }
.sprite { position: absolute; }

.topbar { height: 27px; flex: none; background: #1d1d1d; color: #f0f0f0; display: flex; align-items: center; font-size: 14px; line-height: 26px; white-space: nowrap; }
.activities { width: 97px; padding-left: 12px; letter-spacing: .35px; }
.appicon { margin-left: 12px; }
.appname { width: 110px; margin-left: 6px; }
.appcaret { margin-left: -1px; }
.clock { margin-left: 703px; width: 95px; letter-spacing: -.15px; }
.clockdot { width: 8px; height: 8px; border-radius: 50%; background: #f2f2f2; margin-left: 5px; }
.tray { margin-left: auto; margin-right: 13px; }

.desktop { flex: 1; display: flex; min-height: 0; }
.dock { width: 72px; flex: none; padding-top: 2px; background: linear-gradient(#4a2122, #3c1a28 25%, #32182f 42%, #2a1529 70%, #21151d); display: flex; flex-direction: column; align-items: center; }
.launcher { width: 72px; height: 68px; flex: none; display: flex; align-items: center; }
.launcher svg { margin-left: auto; margin-right: 12px; }
.launcher-active { background: linear-gradient(#554152, #554152) 4px 2px / 64px 64px no-repeat; }
.dots { width: 6px; margin-left: 4px; display: flex; flex-direction: column; gap: 3px; }
.dots b { width: 6px; height: 6px; border-radius: 50%; background: #e95420; }
.faint { width: 7px; height: 5px; background: #3c2d4d; margin: 7px 0 0 9px; }
.appgrid { margin-top: auto; margin-bottom: 19px; display: grid; grid-template-columns: repeat(3, 6px); gap: 6px; }
.appgrid b { width: 6px; height: 6px; border-radius: 1px; background: #eeeeec; }

.browser { flex: 1; display: flex; flex-direction: column; min-width: 0; }
.tabstrip { height: 34px; flex: none; background: #322f30; border-top: 1px solid #464344; padding-left: 9px; display: flex; align-items: center; }
.tabs { display: flex; align-items: center; height: 33px; }
.tabs i { width: 18px; height: 21px; flex: none; border-right: 1px solid #716f70; display: flex; justify-content: center; align-items: center; font-style: normal; font-family: Roboto, sans-serif; }
.tabs svg { width: 16px; height: 16px; margin: 0 -2px; clip-path: inset(0 1.5px); }
.tabs-narrow i { width: 17px; }
.tabs-narrow svg { clip-path: inset(0 2px); }
.tabs i.last { width: 16px; border: 0; }
.tab-active { position: relative; width: 32px; height: 34px; background: #f7f7f7; border-radius: 7px 7px 0 0; display: flex; align-items: center; justify-content: center; }
.tab-active::before, .tab-active::after { content: ""; position: absolute; bottom: 0; width: 7px; height: 7px; }
.tab-active::before { left: -7px; background: radial-gradient(circle at 0 0, transparent 6.5px, #f7f7f7 7px); }
.tab-active::after { right: -7px; background: radial-gradient(circle at 100% 0, transparent 6.5px, #f7f7f7 7px); }
.newtab { margin-left: 16px; }
.wincontrols { margin-left: auto; margin-right: 12px; }

.toolbar { height: 36px; flex: none; background: #f7f7f7; display: flex; align-items: center; }
.navicons { margin-left: 14px; }
.omnibox { width: 1568px; height: 28px; margin-left: 12px; border-radius: 14px; background: #fff; display: flex; align-items: center; padding: 0 10px 0 14px; }
.url { margin-left: 10px; font-size: 14px; line-height: 26px; color: #72757a; letter-spacing: -.4px; }
.url b { font-weight: 400; color: #202124; }
.star { margin-left: auto; }
.toolicons { margin-left: 14px; }
.toolicons text { font-family: Roboto, sans-serif; }

.bookmarks { height: 34px; flex: none; background: #f7f7f7; border-bottom: 1px solid #bbb; padding: 0 13px 3px 13px; display: flex; align-items: center; font-size: 14.67px; color: #494a4c; white-space: nowrap; }
.bookmark-list { display: grid; grid-template-columns: 76px 128px 149px 147px 153px 142px 153px 148px 153px 115px 154px 140px; }
.bookmarks a { display: flex; align-items: center; gap: 8px; }
.bookmarks .apps { gap: 9px; }
.snug { letter-spacing: -.27px; }
.bm { width: 16px; height: 16px; }
.bookmarks span { line-height: 20px; }
.more { margin-left: auto; }
.readsep { width: 1px; height: 16px; background: #c4c4c4; margin: 0 11px 0 9px; }
.bookmarks .reading { color: #2c2d30; }

.viewport { flex: 1; display: flex; justify-content: space-between; min-height: 0; }
.page { width: 481px; margin-left: 676px; font-family: Roboto, sans-serif; color: #5e5d62; font-size: 16px; line-height: 20px; }
.title { font: 400 38px/50px Lato, sans-serif; color: #202020; margin-top: 23px; letter-spacing: -.2px; }
.sub { font-size: 16px; line-height: 20px; color: #1d1b20; margin-top: 28px; }
.count { margin-top: 10px; }
.reset { font-size: 14px; color: #a5a5a5; margin-top: 1px; }
.history { margin-top: 33px; }
.chart { font: 12px "Liberation Sans", sans-serif; margin-top: 7px; fill: #666; }
.chart .tip { fill: #fff; }
.chart .tip-title { font-weight: 700; }
.panel { width: 481px; height: 193px; background: #fbfcff; border-radius: 4px; padding: 0 8px; }
.usage { width: 465px; border-collapse: collapse; table-layout: fixed; }
.usage th, .usage td { text-align: left; padding: 0 8px; height: 50px; }
.usage th { color: #1d1b20; }
.usage thead th { border-bottom: 1px solid #dcdee2; height: 50px; padding-top: 2px; }
.usage tbody th, .usage tbody td { padding-top: 1px; }
.updated { padding-left: 4px; margin-top: 20px; }
.rule { width: 481px; height: 1px; border: 0; background: #e9e9ec; margin: 40px 0 0; }
.status { margin-top: 34px; letter-spacing: -.85px; }
.follow { line-height: 32px; margin-top: 27px; }
.twitter { width: 168px; height: 28px; margin-top: 16px; background: #2886e6; border-radius: 4px; color: #fff; font: 13px/28px "Liberation Sans", sans-serif; display: flex; align-items: center; gap: 5px; padding-left: 11px; }
.scrollbar { width: 15px; background: #f1f1f1; display: flex; flex-direction: column; align-items: center; padding: 6px 0 4px; }
.thumb { width: 11px; height: 384px; background: #c1c1c1; margin: 296px 0 auto; }
```
